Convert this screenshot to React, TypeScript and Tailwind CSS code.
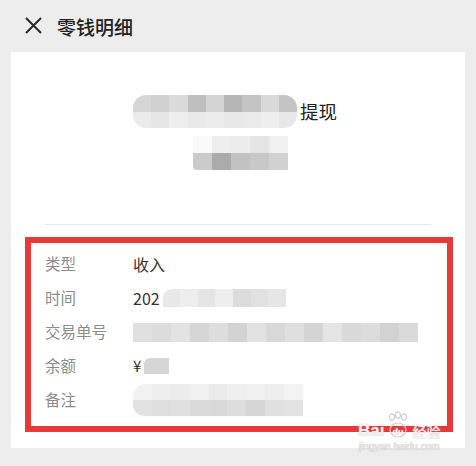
import React from "react";

const cjk = { fontFamily: '"Noto Sans CJK SC", "Noto Sans", sans-serif' };

// pixelated blur stand-in: rows of gray cells
function Mosaic({
  rows,
  className,
}: {
  rows: string[][];
  className?: string;
}) {
  return (
    <div className={"flex flex-col overflow-hidden " + (className ?? "")}>
      {rows.map((r, i) => (
        <div key={i} className="flex flex-1">
          {r.map((c, j) => (
            <div key={j} className="flex-1" style={{ background: c }} />
          ))}
        </div>
      ))}
    </div>
  );
}

function Row({ label, children }: { label: string; children: React.ReactNode }) {
  return (
    <div className="flex h-[34px] items-center">
      <div className="w-[88px] shrink-0 text-[15.5px] text-[#8c8c8c]">{label}</div>
      <div className="flex items-center text-[16px] text-[#333]">{children}</div>
    </div>
  );
}

export default function App() {
  return (
    <div
      className="relative w-[476px] h-[466px] bg-[#ededed] overflow-hidden"
      style={cjk}
    >
      <div className="flex h-[52px] items-center pl-[24px] gap-[14px]">
        <svg width="19" height="19" viewBox="0 0 19 19" className="mt-[-1px]">
          <path d="M2 2L17 17M17 2L2 17" stroke="#2a2a2a" strokeWidth="2" />
        </svg>
        <div className="text-[19px] font-medium text-[#222] leading-none">零钱明细</div>
      </div>

      <div className="ml-[11px] w-[454px] h-[396px] bg-white flex flex-col">
        <div className="mt-[43px] flex items-center justify-center pr-[6px]">
          <Mosaic
            className="w-[164px] h-[33px] rounded-[13px]"
            rows={[
              ["#d6d6d6", "#d1d1d1", "#dadada", "#bfbfbf", "#d4d4d4", "#b6b6b6", "#c3c3c3", "#d9d9d9", "#c4c4c4"],
              ["#ebebeb", "#e6e6e6", "#eeeeee", "#e9e9e9", "#ececec", "#e7e7e7", "#eaeaea", "#eeeeee", "#e8e8e8"],
            ]}
          />
          <span className="ml-[3px] text-[18.5px] text-[#222]">提现</span>
        </div>
        <div className="mt-[8px] flex justify-center pl-[5px]">
          <Mosaic
            className="w-[95px] h-[34px] rounded-bl-[4px]"
            rows={[
              ["#fafafa", "#eeeeee", "#ececec", "#e4e4e4", "#f0f0f0"],
              ["#cbcbcb", "#ababab", "#c2c2c2", "#c8c8c8", "#d1d1d1"],
            ]}
          />
        </div>

        <div className="mt-[54px] mx-[34px] h-px bg-[#e8e8e8]" />

        <div className="mt-[12px] ml-[14px] w-[428px] h-[195px] border-[6px] border-[#e63a3a] pl-[14px] pt-[4px]">
          <Row label="类型">收入</Row>
          <Row label="时间">
            <span>202</span>
            <Mosaic
              className="ml-[3px] w-[123px] h-[18px] rounded-tl-[9px]"
              rows={[["#e8e8e8", "#ededed", "#e4e4e4", "#eeeeee", "#dcdcdc", "#e1e1e1", "#e6e6e6"]]}
            />
          </Row>
          <Row label="交易单号">
            <Mosaic
              className="w-[285px] h-[19px]"
              rows={[
                ["#e0e0e0", "#dcdcdc", "#e3e3e3", "#d6d6d6", "#dddddd", "#d3d3d3", "#e2e2e2", "#d8d8d8", "#dfdfdf", "#d4d4d4", "#e4e4e4", "#d9d9d9", "#dcdcdc", "#d2d2d2", "#dadada"],
              ]}
            />
          </Row>
          <Row label="余额">
            <span className="text-[15px]">¥</span>
            <div className="ml-[3px] w-[25px] h-[16px] bg-[#d6d6d6] rounded-tl-[6px]" />
          </Row>
          <Row label="备注">
            <Mosaic
              className="w-[170px] h-[32px] rounded-l-[12px]"
              rows={[
                ["#f2f2f2", "#eeeeee", "#ececec", "#f0f0f0", "#eaeaea", "#efefef", "#f1f1f1", "#eeeeee", "#f3f3f3"],
                ["#e2e2e2", "#dedede", "#e0e0e0", "#dadada", "#d8d8d8", "#dddddd", "#d6d6d6", "#e0e0e0", "#e3e3e3"],
              ]}
            />
          </Row>
        </div>
      </div>

      {/* watermark */}
      <div className="absolute left-[358px] top-[411px] flex flex-col items-center leading-none">
        <div
          className="flex items-end text-white/85"
          style={{ textShadow: "0 0 1px #aaa" }}
        >
          <span
            className="text-[17px] font-bold"
            style={{ fontFamily: '"Liberation Sans", sans-serif' }}
          >
            Bai
          </span>
          <svg width="26" height="28" viewBox="0 0 26 28" className="mx-[1px]">
            <g fill="none" stroke="#cfcfcf" strokeWidth="1.2">
              <ellipse cx="7" cy="6" rx="2.5" ry="3.2" />
              <ellipse cx="13" cy="4" rx="2.5" ry="3.2" />
              <ellipse cx="19" cy="6" rx="2.5" ry="3.2" />
              <path d="M5 19c0-4 4-7 8-7s8 3 8 7c0 4-4 7-8 7s-8-3-8-7z" />
            </g>
            <text x="13" y="24" textAnchor="middle" fontSize="9" fontWeight="bold" fill="#fff" fontFamily="Liberation Sans, sans-serif">du</text>
          </svg>
          <span className="text-[14px] font-medium mb-[1px]" style={cjk}>经验</span>
        </div>
        <div
          className="mt-[3px] text-[10px] text-[#eeeeee]"
          style={{ fontFamily: '"Liberation Sans", sans-serif', textShadow: "0 0 1px #999" }}
        >
          jingyan.baidu.com
        </div>
      </div>
    </div>
  );
}
